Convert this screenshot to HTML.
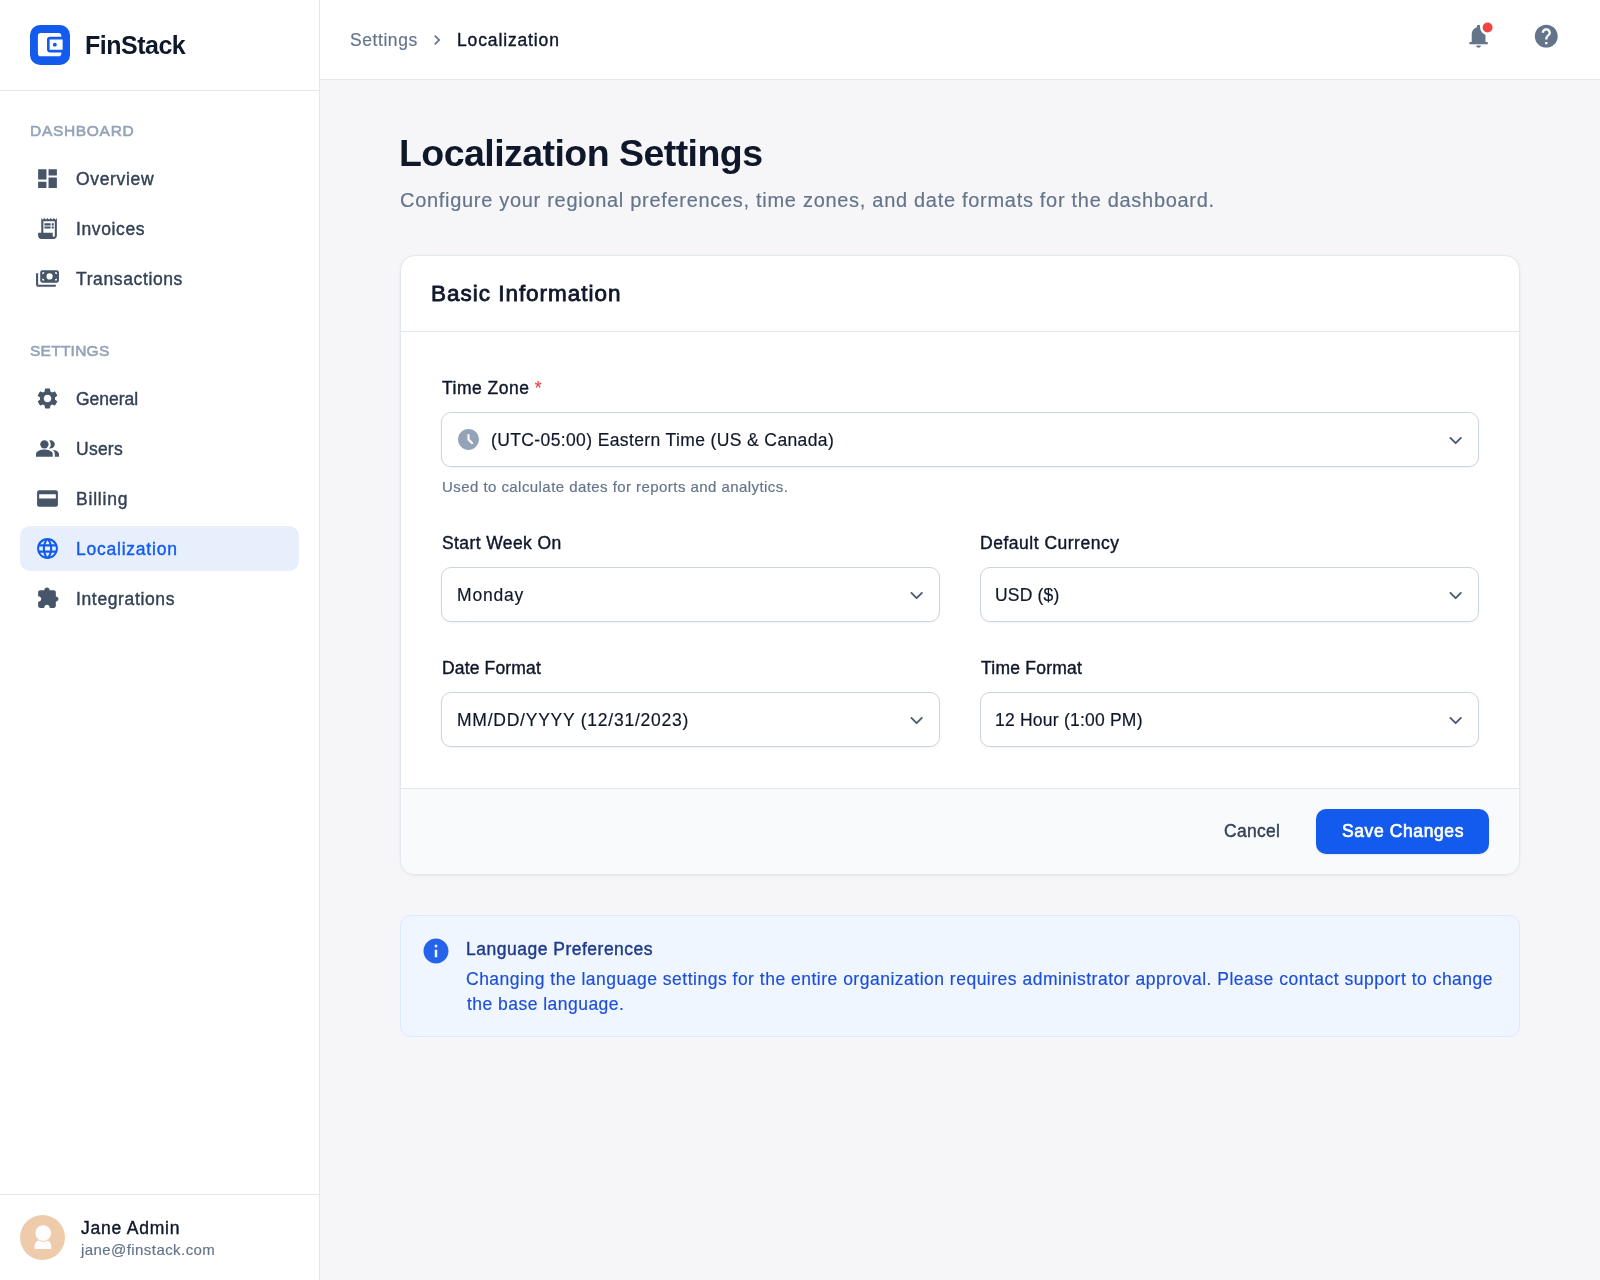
<!DOCTYPE html>
<html lang="en">
<head>
<meta charset="utf-8">
<title>FinStack - Localization Settings</title>
<style>
*{box-sizing:border-box;margin:0;padding:0}
html,body{width:1600px;height:1280px;overflow:hidden}
body{font-family:"Liberation Sans",Arial,sans-serif;background:#f6f6f8;color:#0f172a;position:relative;-webkit-font-smoothing:antialiased}
.abs{position:absolute}
.t{position:absolute;white-space:nowrap;line-height:1;will-change:transform}
svg{display:block}
/* sidebar */
#sidebar{position:absolute;left:0;top:0;width:320px;height:1280px;background:#fff;border-right:1px solid #e2e8f0}
#brand{position:absolute;left:0;top:0;width:319px;height:91px;border-bottom:1px solid #e2e8f0}
#logo{position:absolute;left:30px;top:25px;width:40px;height:40px;border-radius:10px;background:#135bec}
#logo svg{position:absolute;left:4.4px;top:4.4px;width:31.25px;height:31.25px;fill:#fff}
.sec{color:#94a3b8;font-size:15.5px;-webkit-text-stroke:.6px #94a3b8;left:30px}
.nav{position:absolute;left:20px;width:279px;height:45px;border-radius:10px;color:#334155}
.nav svg{position:absolute;left:15px;top:9.8px;width:25px;height:25px;fill:#475569}
.nav span{-webkit-text-stroke:.4px currentColor;will-change:transform;position:absolute;left:55.5px;top:13px;font-size:17.5px;line-height:20px;white-space:nowrap}
.nav.active{background:#e7effd;color:#135bec}
.nav.active svg{fill:#135bec}
#user{position:absolute;left:0;top:1194px;width:319px;height:86px;border-top:1px solid #e2e8f0}
#avatar{position:absolute;left:20px;top:20px;width:45px;height:45px;border-radius:50%;background:#eecbaa;overflow:hidden}
/* topbar */
#topbar{position:absolute;left:320px;top:0;width:1280px;height:80px;background:#fff;border-bottom:1px solid #e2e8f0}
/* main */
#card{position:absolute;left:400px;top:255px;width:1120px;height:620px;background:#fff;border:1px solid #e2e8f0;border-radius:15px;box-shadow:0 1px 3px rgba(0,0,0,.06);overflow:hidden}
#cardhead{position:absolute;left:0;top:0;width:100%;height:76px;border-bottom:1px solid #e2e8f0}
#cardfoot{position:absolute;left:0;top:532px;width:100%;height:86px;border-top:1px solid #e2e8f0;background:#f8fafc}
.lbl{font-size:17.5px;color:#0f172a;-webkit-text-stroke:.4px #0f172a}
.sel{position:absolute;height:55px;border:1px solid #cbd5e1;border-radius:10px;background:#fff;box-shadow:0 1px 2px rgba(0,0,0,.05)}
.sel span{-webkit-text-stroke:.18px currentColor;will-change:transform;position:absolute;left:15px;top:17px;font-size:17.5px;line-height:20px;color:#0f172a;white-space:nowrap}
.sel svg.arr{position:absolute;right:8px;top:14px;width:28px;height:28px;fill:none;stroke:#4d5b71;stroke-width:1.42;stroke-linecap:round;stroke-linejoin:round}
#save{position:absolute;left:915px;top:20px;width:173px;height:45px;border-radius:10px;background:#135bec;box-shadow:0 1px 2px rgba(0,0,0,.08)}
#info{position:absolute;left:400px;top:915px;width:1120px;height:122px;background:#eff6ff;border:1px solid #dbeafe;border-radius:10px}
.med{-webkit-text-stroke:.4px currentColor}
.reg{-webkit-text-stroke:.18px currentColor}
/*LS-START*/
#brandname{letter-spacing:-0.50px}
#sec1{letter-spacing:0.69px}
#n1{letter-spacing:0.67px}
#n2{letter-spacing:0.62px}
#n3{letter-spacing:0.62px}
#sec2{letter-spacing:0.25px}
#n4{letter-spacing:-0.04px}
#n5{letter-spacing:0.25px}
#n6{letter-spacing:0.79px}
#n7{letter-spacing:0.77px}
#n8{letter-spacing:0.64px}
#uname{letter-spacing:0.77px}
#umail{letter-spacing:0.43px}
#bc1{letter-spacing:0.57px}
#bc2{letter-spacing:0.86px}
#title{letter-spacing:-0.55px}
#subtitle{letter-spacing:0.70px}
#ch{letter-spacing:0.98px}
#l1{letter-spacing:0.50px}
#s1{letter-spacing:0.38px}
#hint{letter-spacing:0.44px}
#l2{letter-spacing:0.40px}
#s2{letter-spacing:0.80px}
#l3{letter-spacing:0.51px}
#s3{letter-spacing:0.17px}
#l4{letter-spacing:0.15px}
#s4{letter-spacing:0.76px}
#l5{letter-spacing:0.23px}
#s5{letter-spacing:0.22px}
#cancel{letter-spacing:0.30px}
#savet{letter-spacing:0.60px}
#it{letter-spacing:0.50px}
#ib1{letter-spacing:0.50px}
#ib2{letter-spacing:0.47px}
/*LS-END*/
</style>
</head>
<body>

<div id="sidebar">
  <div id="brand">
    <div id="logo"><svg viewBox="0 0 24 24"><path d="M21 18v1c0 1.1-.9 2-2 2H5c-1.11 0-2-.9-2-2V5c0-1.1.89-2 2-2h14c1.1 0 2 .9 2 2v1h-9c-1.11 0-2 .9-2 2v8c0 1.1.89 2 2 2h9zm-9-2h10V8H12v8zm4-2.500c-.83 0-1.500-.67-1.500-1.500s.67-1.500 1.500-1.500 1.500.67 1.500 1.500-.67 1.500-1.500 1.500z"/></svg></div>
    <div class="t" id="brandname" style="left:85px;top:33px;font-size:25px;font-weight:bold">FinStack</div>
  </div>

  <div class="t sec" id="sec1" style="top:123px">DASHBOARD</div>
  <div class="nav" style="top:156px"><svg viewBox="0 0 24 24"><path d="M3 13h8V3H3v10zm0 8h8v-6H3v6zm10 0h8V11h-8v10zm0-18v6h8V3h-8z"/></svg><span id="n1">Overview</span></div>
  <div class="nav" style="top:206px"><svg viewBox="0 0 24 24"><path d="M19.500 3.500L18 2l-1.500 1.500L15 2l-1.500 1.500L12 2l-1.500 1.500L9 2 7.500 3.500 6 2v14H3v3c0 1.660 1.340 3 3 3h12c1.660 0 3-1.340 3-3V2l-1.500 1.500zM19 19c0 .55-.45 1-1 1s-1-.45-1-1v-3H8V5h11v14z"/><path d="M9 7h6v2H9zM16 7h2v2h-2zM9 10h6v2H9zM16 10h2v2h-2z"/></svg><span id="n2">Invoices</span></div>
  <div class="nav" style="top:256px"><svg viewBox="0 0 24 24"><path fill-rule="evenodd" d="M7 4h14a2 2 0 0 1 2 2v8a2 2 0 0 1-2 2H7a2 2 0 0 1-2-2V6a2 2 0 0 1 2-2zm7 3a3 3 0 1 0 0 6 3 3 0 0 0 0-6zM7 6v2a2 2 0 0 0 2-2H7zm14 0h-2a2 2 0 0 0 2 2V6zM7 14h2a2 2 0 0 0-2-2v2zm14 0v-2a2 2 0 0 0-2 2h2z"/><path d="M1 7h2v11h17v2H3a2 2 0 0 1-2-2V7z"/></svg><span id="n3">Transactions</span></div>

  <div class="t sec" id="sec2" style="top:343px">SETTINGS</div>
  <div class="nav" style="top:376px"><svg viewBox="0 0 24 24"><path d="M19.140 12.940c.040-.3.060-.61.060-.940 0-.32-.020-.64-.070-.940l2.030-1.580c.18-.14.23-.41.120-.61l-1.920-3.320c-.12-.22-.37-.29-.59-.22l-2.390.96c-.5-.38-1.030-.7-1.620-.94l-.36-2.540c-.04-.24-.24-.41-.48-.41h-3.840c-.24 0-.43.17-.47.41l-.36 2.540c-.59.24-1.130.57-1.620.94l-2.390-.96c-.22-.08-.47 0-.59.22L2.740 8.870c-.12.21-.08.47.12.61l2.030 1.580c-.05.3-.09.63-.09.94s.02.64.07.94l-2.030 1.580c-.18.14-.23.41-.12.610l1.920 3.320c.12.22.37.29.59.22l2.390-.96c.5.38 1.030.7 1.620.94l.36 2.540c.05.24.24.41.48.41h3.840c.24 0 .44-.17.47-.41l.36-2.540c.59-.24 1.130-.56 1.620-.94l2.390.96c.22.08.47 0 .59-.22l1.920-3.320c.12-.22.07-.47-.12-.61l-2.010-1.580zM12 15.600c-1.980 0-3.600-1.620-3.600-3.600s1.620-3.600 3.600-3.600 3.600 1.620 3.600 3.600-1.620 3.600-3.600 3.600z"/></svg><span id="n4">General</span></div>
  <div class="nav" style="top:426px"><svg viewBox="0 0 24 24"><path d="M16.670 13.130C18.040 14.060 19 15.320 19 17v3h4v-3c0-2.180-3.570-3.470-6.330-3.870z"/><circle cx="9" cy="8" r="4"/><path d="M9 13c-2.670 0-8 1.340-8 4v3h16v-3c0-2.660-5.330-4-8-4z"/><path d="M15 12c2.210 0 4-1.790 4-4s-1.790-4-4-4c-.47 0-.91.100-1.330.240a5.980 5.980 0 0 1 0 7.520c.42.140.86.240 1.330.240z"/></svg><span id="n5">Users</span></div>
  <div class="nav" style="top:476px"><svg viewBox="0 0 24 24"><path fill-rule="evenodd" d="M4 4h16a2 2 0 0 1 2 2v12a2 2 0 0 1-2 2H4a2 2 0 0 1-2-2V6a2 2 0 0 1 2-2zm0 4v4h16V8H4z"/></svg><span id="n6">Billing</span></div>
  <div class="nav active" style="top:526px"><svg viewBox="0 0 24 24"><path d="M11.990 2C6.470 2 2 6.480 2 12s4.470 10 9.990 10C17.520 22 22 17.520 22 12S17.520 2 11.990 2zm6.930 6h-2.950c-.32-1.250-.78-2.450-1.380-3.560 1.840.63 3.370 1.910 4.330 3.560zM12 4.040c.83 1.200 1.480 2.530 1.910 3.960h-3.820c.43-1.430 1.080-2.760 1.910-3.960zM4.260 14C4.100 13.360 4 12.690 4 12s.1-1.360.26-2h3.380c-.08.66-.14 1.320-.14 2 0 .68.06 1.340.14 2H4.260zm.82 2h2.950c.32 1.250.78 2.450 1.380 3.560-1.840-.63-3.370-1.900-4.330-3.560zm2.950-8H5.080c.96-1.660 2.490-2.930 4.330-3.560C8.810 5.550 8.350 6.750 8.030 8zM12 19.960c-.83-1.200-1.480-2.530-1.910-3.960h3.820c-.43 1.430-1.080 2.760-1.910 3.960zM14.340 14H9.660c-.09-.66-.16-1.320-.16-2 0-.68.07-1.350.16-2h4.680c.09.65.16 1.320.16 2 0 .68-.07 1.340-.16 2zm.25 5.560c.6-1.110 1.060-2.310 1.380-3.560h2.950c-.96 1.650-2.490 2.930-4.330 3.560zM16.360 14c.08-.66.14-1.320.14-2 0-.68-.06-1.340-.14-2h3.380c.16.64.26 1.310.26 2s-.1 1.360-.26 2h-3.380z"/></svg><span id="n7">Localization</span></div>
  <div class="nav" style="top:576px"><svg viewBox="0 0 24 24"><path d="M8.800 21H5q-.825 0-1.412-.587T3 19v-3.800q1.200 0 2.100-.762T6 12.500q0-1.175-.9-1.937T3 9.800V6q0-.825.588-1.412T5 4h4q0-1.050.725-1.775T11.500 1.500q1.050 0 1.775.725T14 4h4q.825 0 1.413.588T20 6v4q1.050 0 1.775.725T22.500 12.500q0 1.050-.725 1.775T20 15v4q0 .825-.587 1.413T18 21h-3.800q0-1.250-.787-2.125T11.500 18q-1.125 0-1.912.875T8.800 21Z"/></svg><span id="n8">Integrations</span></div>

  <div id="user">
    <div id="avatar"><svg viewBox="0 0 45 45" style="position:absolute;left:0;top:0;width:45px;height:45px"><path d="M14.700 33.900V30.600a5.600 5.600 0 0 1 5.600-5.600h5.300a5.600 5.600 0 0 1 5.600 5.600V33.900Z" fill="#fdfdfd"/><circle cx="23.150" cy="18.100" r="8.300" fill="#fdfdfd" stroke="#eecbaa" stroke-width=".9"/></svg></div>
    <div class="t med" id="uname" style="left:80.5px;top:25px;font-size:17.5px;color:#0f172a">Jane Admin</div>
    <div class="t reg" id="umail" style="left:81.4px;top:47px;font-size:15px;color:#64748b">jane@finstack.com</div>
  </div>
</div>

<div id="topbar">
  <div class="t reg" id="bc1" style="left:29.6px;top:32px;font-size:17.5px;color:#64748b">Settings</div>
  <svg class="abs" viewBox="0 0 24 24" style="left:107px;top:30px;width:20px;height:20px;fill:#64748b"><path d="M10 6L8.590 7.410 13.170 12l-4.580 4.590L10 18l6-6z"/></svg>
  <div class="t med" id="bc2" style="left:137px;top:32px;font-size:17.500px;color:#0f172a">Localization</div>
  <svg class="abs" viewBox="0 0 34 34" style="left:1142px;top:20px;width:34px;height:34px;fill:#64748b"><g transform="translate(2.850 2.500) scale(1.14583)"><path d="M4 19v-2h2v-7q0-2.075 1.250-3.688T10.500 4.200V3.500q0-.625.438-1.062T12 2q.625 0 1.063.438T13.500 3.500v.7q2 .5 3.250 2.113T18 10v7h2v2H4Zm8 3q-.825 0-1.412-.587T10 20h4q0 .825-.587 1.413T12 22Z"/></g><circle cx="25.600" cy="7.550" r="7.500" fill="#fff"/><circle cx="25.600" cy="7.550" r="5" fill="#ef4444"/></svg>
  
  <svg class="abs" viewBox="0 0 34 34" style="left:1210px;top:20px;width:34px;height:34px;fill:#64748b"><g transform="translate(2.550 2.410) scale(1.14583)"><path d="M12 2C6.480 2 2 6.480 2 12s4.480 10 10 10 10-4.480 10-10S17.520 2 12 2zm1 17h-2v-2h2v2zm2.070-7.750l-.9.920C13.450 12.900 13 13.500 13 15h-2v-.5c0-1.100.45-2.100 1.170-2.830l1.240-1.260c.37-.36.59-.86.59-1.410 0-1.100-.9-2-2-2s-2 .9-2 2H8c0-2.210 1.790-4 4-4s4 1.790 4 4c0 .88-.36 1.680-.93 2.250z"/></g></svg>
</div>

<div class="t" id="title" style="left:399.2px;top:135px;font-size:37.500px;font-weight:bold;color:#0f172a">Localization Settings</div>
<div class="t reg" id="subtitle" style="left:400.2px;top:190px;font-size:20px;color:#64748b">Configure your regional preferences, time zones, and date formats for the dashboard.</div>

<div id="card">
  <div id="cardhead"><div class="t" id="ch" style="left:30.4px;top:27px;font-size:22.500px;-webkit-text-stroke:.8px #0f172a;color:#0f172a">Basic Information</div></div>

  <div class="t lbl" id="l1" style="left:41px;top:124px">Time Zone <span style="color:#ef4444;-webkit-text-stroke:.2px #ef4444">*</span></div>
  <div class="sel" style="left:40px;top:156px;width:1038px">
    <svg viewBox="0 0 24 24" style="position:absolute;left:14px;top:14px;width:25px;height:25px;fill:#94a3b8"><path d="M11.990 2C6.470 2 2 6.480 2 12s4.470 10 9.990 10C17.520 22 22 17.520 22 12S17.520 2 11.990 2zm3.300 14.710L11 12.410V7h2v4.590l3.710 3.710-1.420 1.410z"/></svg>
    <span id="s1" style="left:49px;top:17px">(UTC-05:00) Eastern Time (US &amp; Canada)</span>
    <svg class="arr" viewBox="0 0 28 28"><path transform="translate(.5 .4) scale(1.3125)" d="M6 8l4 4 4-4"/></svg>
  </div>
  <div class="t reg" id="hint" style="left:40.5px;top:223px;font-size:15px;color:#64748b">Used to calculate dates for reports and analytics.</div>

  <div class="t lbl" id="l2" style="left:41px;top:279px">Start Week On</div>
  <div class="sel" style="left:40px;top:311px;width:499px"><span id="s2">Monday</span><svg class="arr" viewBox="0 0 28 28"><path transform="translate(.5 .4) scale(1.3125)" d="M6 8l4 4 4-4"/></svg></div>
  <div class="t lbl" id="l3" style="left:578.5px;top:279px">Default Currency</div>
  <div class="sel" style="left:579px;top:311px;width:499px"><span id="s3" style="left:14px">USD ($)</span><svg class="arr" viewBox="0 0 28 28"><path transform="translate(.5 .4) scale(1.3125)" d="M6 8l4 4 4-4"/></svg></div>

  <div class="t lbl" id="l4" style="left:41px;top:404px">Date Format</div>
  <div class="sel" style="left:40px;top:436px;width:499px"><span id="s4">MM/DD/YYYY (12/31/2023)</span><svg class="arr" viewBox="0 0 28 28"><path transform="translate(.5 .4) scale(1.3125)" d="M6 8l4 4 4-4"/></svg></div>
  <div class="t lbl" id="l5" style="left:579.5px;top:404px">Time Format</div>
  <div class="sel" style="left:579px;top:436px;width:499px"><span id="s5" style="left:14px">12 Hour (1:00 PM)</span><svg class="arr" viewBox="0 0 28 28"><path transform="translate(.5 .4) scale(1.3125)" d="M6 8l4 4 4-4"/></svg></div>

  <div id="cardfoot">
    <div class="t med" id="cancel" style="left:823.4px;top:34px;font-size:17.500px;color:#334155">Cancel</div>
    <div id="save"><div class="t" id="savet" style="left:25.7px;top:14px;font-size:17.500px;-webkit-text-stroke:.65px #fff;color:#fff">Save Changes</div></div>
  </div>
</div>

<div id="info">
  <svg class="abs" viewBox="0 0 24 24" style="left:20px;top:20px;width:30px;height:30px;fill:#2563eb"><path d="M12 2C6.480 2 2 6.480 2 12s4.480 10 10 10 10-4.480 10-10S17.520 2 12 2zm1 15h-2v-6h2v6zm0-8h-2V7h2v2z"/></svg>
  <div class="t med" id="it" style="left:65px;top:25px;font-size:17.500px;color:#1e3a8a">Language Preferences</div>
  <div class="t reg" id="ib1" style="left:65px;top:55px;font-size:17.500px;color:#1d4ed8">Changing the language settings for the entire organization requires administrator approval. Please contact support to change</div>
  <div class="t reg" id="ib2" style="left:66px;top:80px;font-size:17.500px;color:#1d4ed8">the base language.</div>
</div>

</body>
</html>
